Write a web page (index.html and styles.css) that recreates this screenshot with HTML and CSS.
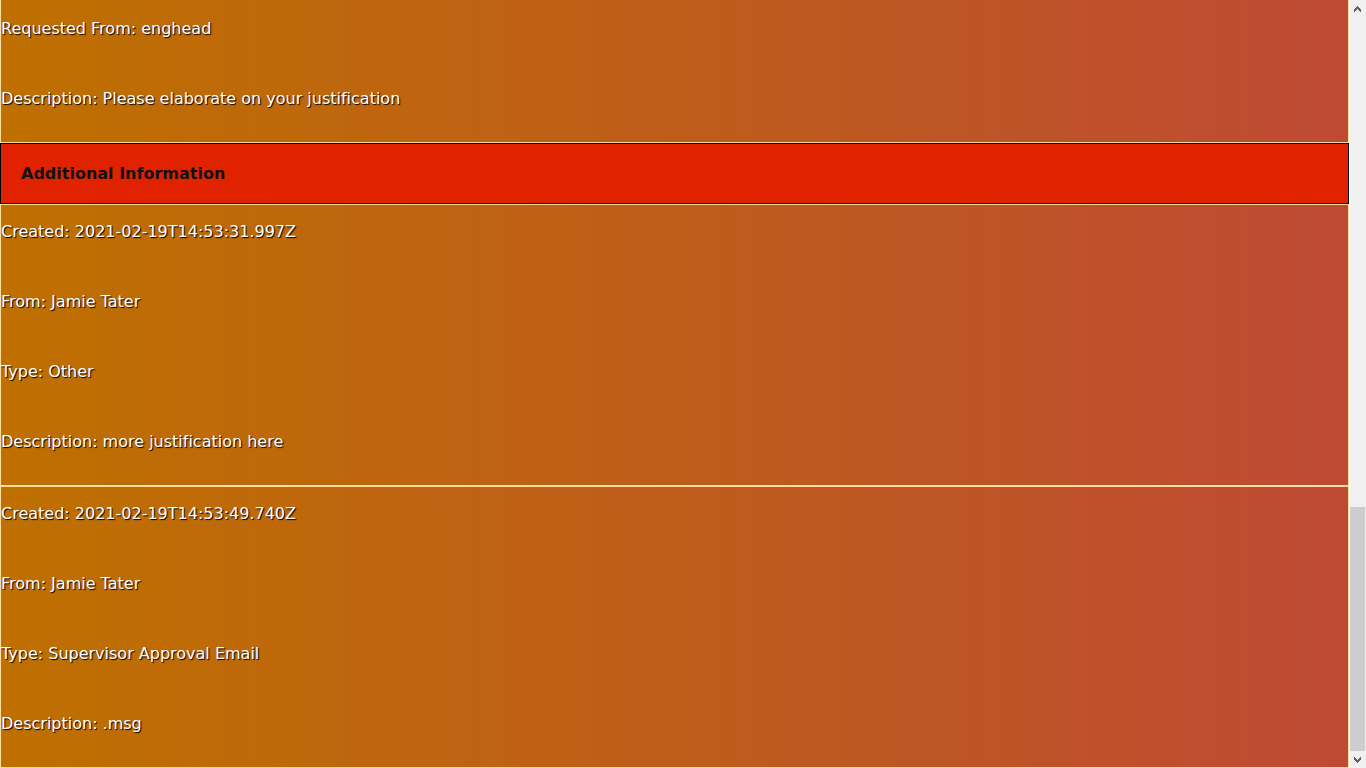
FILE: index.html
```html
<!DOCTYPE html>
<html lang="en">
<head>
<meta charset="utf-8">
<title>Request Details</title>
<link rel="stylesheet" href="styles.css">
</head>
<body>
<div class="window">
  <main class="content">
    <section class="record record-continued">
      <p class="field">Requested From: enghead</p>
      <p class="field">Description: Please elaborate on your justification</p>
    </section>
    <h2 class="section-title">Additional Information</h2>
    <section class="record">
      <p class="field">Created: 2021-02-19T14:53:31.997Z</p>
      <p class="field">From: Jamie Tater</p>
      <p class="field">Type: Other</p>
      <p class="field">Description: more justification here</p>
    </section>
    <section class="record">
      <p class="field">Created: 2021-02-19T14:53:49.740Z</p>
      <p class="field">From: Jamie Tater</p>
      <p class="field">Type: Supervisor Approval Email</p>
      <p class="field">Description: .msg</p>
    </section>
  </main>
  <aside class="scrollbar" aria-label="Scroll bar">
    <button class="scroll-button" type="button" aria-label="Scroll up">
      <svg width="7" height="6" viewBox="0 0 7 6" aria-hidden="true"><path d="M3 0h1v1h1v1h1v1h1v3H6V5H5V4H4V3H3v1H2v1H1v1H0V3h1V2h1V1h1z" /></svg>
    </button>
    <div class="track"><div class="thumb"></div></div>
    <button class="scroll-button" type="button" aria-label="Scroll down">
      <svg width="7" height="6" viewBox="0 0 7 6" aria-hidden="true"><path d="M3 6h1V5h1V4h1V3h1V0H6v1H5v1H4v1H3V2H2V1H1V0H0v3h1v1h1v1h1z" /></svg>
    </button>
  </aside>
</div>
</body>
</html>
```
FILE: styles.css
```css
* {
  box-sizing: border-box;
}

body {
  margin: 0;
  background: #fff;
  font-family: Verdana, "DejaVu Sans", sans-serif;
  font-size: 16px;
  line-height: 20px;
  font-variant-ligatures: none;
}

.window {
  display: flex;
  height: 100vh;
  overflow: hidden;
}

.content {
  flex: 1;
  min-width: 0;
}

.record {
  border: 1px solid #ffdca0;
  background: linear-gradient(to right, #be7000, #be4a35);
  color: #fff;
  text-shadow: 1px 1px 1px #000;
}

.record-continued {
  padding-top: 2px;
  border-top: 0;
}

.field {
  margin: 0;
  padding: 17px 0 33px;
}

.section-title {
  margin: 0;
  padding: 20px;
  border: 1px solid #000;
  background: #e02200;
  color: #111;
  font-size: 16px;
  line-height: 19px;
}

.scrollbar {
  display: flex;
  flex-direction: column;
  width: 17px;
  border-left: 1px solid #fff;
  background: #f0f0f0;
}

.scroll-button {
  display: flex;
  align-items: center;
  justify-content: center;
  height: 17px;
  padding: 1px 1px 0 0;
  border: 0;
  background: none;
}

.scroll-button path {
  fill: #606060;
}

.track {
  display: flex;
  flex: 1;
  flex-direction: column;
  justify-content: flex-end;
  padding-right: 1px;
}

.thumb {
  height: 33.2%;
  background: #cdcdcd;
}
```
